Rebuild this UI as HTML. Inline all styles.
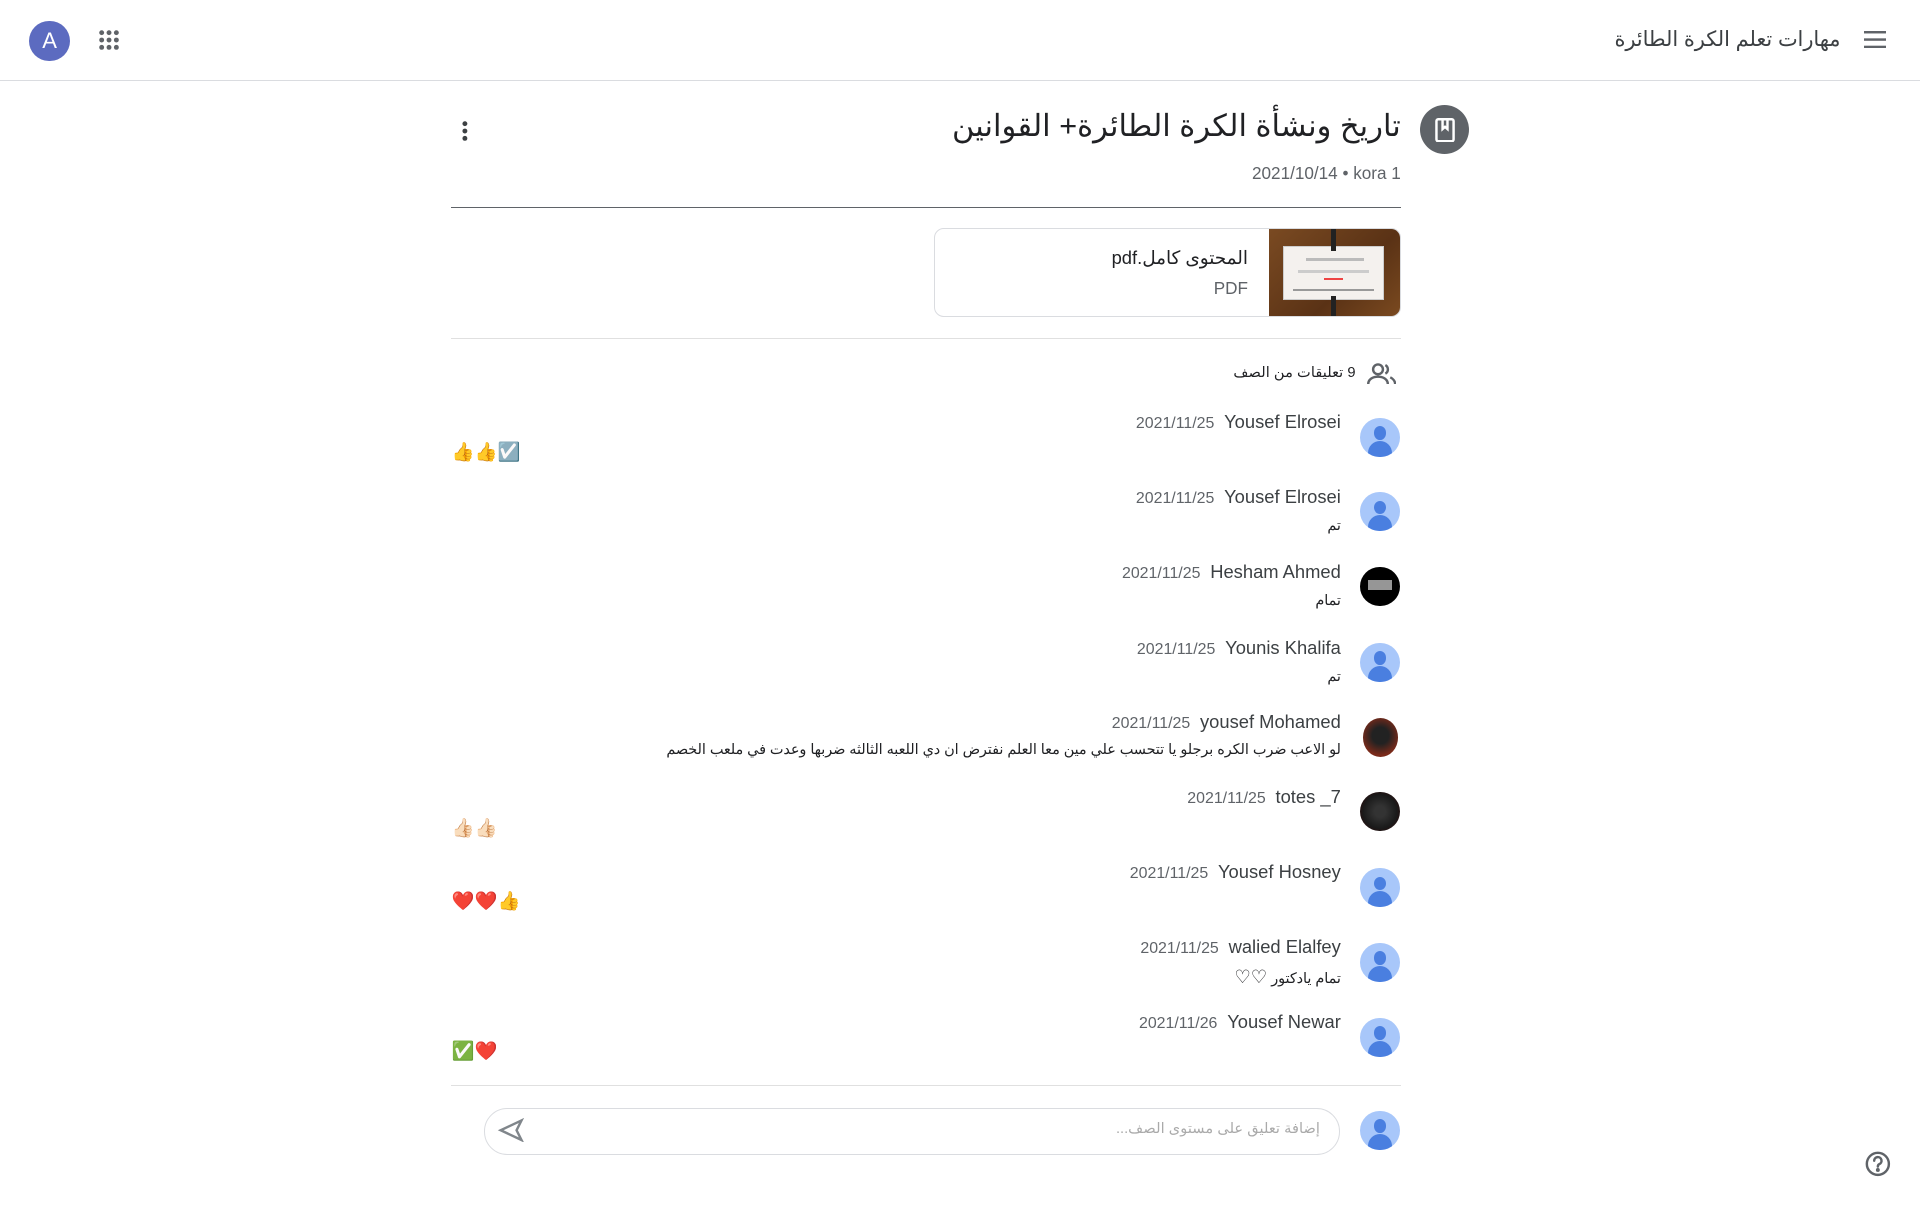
<!DOCTYPE html>
<html><head><meta charset="utf-8">
<style>
*{margin:0;padding:0;box-sizing:border-box}
html,body{width:1920px;height:1206px;overflow:hidden;background:#fff}
#w{zoom:1.22449;width:1568px;height:985px;position:relative;font-family:"Liberation Sans","Noto Sans CJK SC",sans-serif;color:#3c4043}
.a{position:absolute}
.r{position:absolute;text-align:right;white-space:nowrap;direction:rtl}
.av{position:absolute;width:32px;height:32px;border-radius:50%;background:#a8c7fa;overflow:hidden}
.av:before{content:"";position:absolute;left:11px;top:7px;width:10px;height:11px;border-radius:50%;background:#4a7fe0}
.av:after{content:"";position:absolute;left:6px;top:19px;width:20px;height:14px;border-radius:10px 10px 4px 4px;background:#4a7fe0}
.nm{font-size:15px;color:#3c4043}
.dt{font-size:13px;color:#5f6368;margin-right:8px}
.bd{font-size:11.7px;color:#202124}
.em{position:absolute;left:369px;font-size:15px;font-family:"DejaVu Sans",sans-serif}
</style></head><body><div id="w">
<div class="a" style="left:0;top:65px;width:1568px;height:1px;background:#dadce0"></div>
<div class="a" style="left:24px;top:17px;width:33px;height:33px;border-radius:50%;background:#5c6bc0;color:#fff;font-size:18px;text-align:center;line-height:33px">A</div>
<svg class="a" style="left:80px;top:24px" width="18" height="18" viewBox="0 0 18 18" fill="#5f6368"><circle cx="3" cy="3" r="2"/><circle cx="9" cy="3" r="2"/><circle cx="15" cy="3" r="2"/><circle cx="3" cy="9" r="2"/><circle cx="9" cy="9" r="2"/><circle cx="15" cy="9" r="2"/><circle cx="3" cy="15" r="2"/><circle cx="9" cy="15" r="2"/><circle cx="15" cy="15" r="2"/></svg>
<div class="r" style="right:65px;top:22px;font-size:17px;color:#3c4043">مهارات تعلم الكرة الطائرة</div>
<svg class="a" style="left:1522px;top:25px" width="18" height="14" viewBox="0 0 18 14" fill="#5f6368"><rect y="0" width="18" height="2"/><rect y="6" width="18" height="2"/><rect y="12" width="18" height="2"/></svg>

<div class="a" style="left:1160px;top:86px;width:40px;height:40px;border-radius:50%;background:#5f6368"></div>
<svg class="a" style="left:1171px;top:96px" width="18" height="20" viewBox="0 0 18 20" fill="none" stroke="#fff" stroke-width="2"><rect x="2" y="1" width="14" height="18" rx="1.5"/><path d="M7 1v8l2-1.8 2 1.8V1"/></svg>
<div class="r" style="right:424px;top:89px;font-size:25px;color:#202124">تاريخ ونشأة الكرة الطائرة+ القوانين</div>
<div class="r" style="right:424px;top:133px;font-size:14px;color:#5f6368;direction:ltr">2021/10/14 • kora 1</div>
<svg class="a" style="left:376px;top:98px" width="8" height="18" viewBox="0 0 8 18" fill="#3c4043"><circle cx="4" cy="3" r="2"/><circle cx="4" cy="9" r="2"/><circle cx="4" cy="15" r="2"/></svg>
<div class="a" style="left:368px;top:169px;width:776px;height:1px;background:#5f6368"></div>

<div class="a" style="left:763px;top:186px;width:381px;height:73px;border:1px solid #dadce0;border-radius:8px;overflow:hidden">
<div class="a" style="right:0;top:0;width:107px;height:73px;background:linear-gradient(135deg,#7a4a22,#5a3215 60%,#7b4a20)">
<div class="a" style="left:12px;top:14px;width:82px;height:44px;background:#f4f1ee;border:1px solid #ccc"></div>
<div class="a" style="left:51px;top:0;width:4px;height:18px;background:#222"></div>
<div class="a" style="left:51px;top:55px;width:4px;height:18px;background:#222"></div>
<div class="a" style="left:30px;top:24px;width:48px;height:2px;background:#bbb"></div>
<div class="a" style="left:24px;top:34px;width:58px;height:2px;background:#ccc"></div>
<div class="a" style="left:45px;top:40px;width:16px;height:2px;background:#e44"></div>
<div class="a" style="left:20px;top:49px;width:66px;height:2px;background:#999"></div>
</div>
<div class="r" style="right:124px;top:15px;font-size:15px;color:#202124">المحتوى كامل.pdf</div>
<div class="r" style="right:124px;top:40px;font-size:14px;color:#5f6368">PDF</div>
</div>
<div class="a" style="left:368px;top:276px;width:776px;height:1px;background:#e0e0e0"></div>

<svg class="a" style="left:1116px;top:296px" width="24" height="20" viewBox="0 0 24 20" fill="none" stroke="#5f6368" stroke-width="2"><circle cx="9" cy="6" r="4"/><path d="M1 18c0-4 4-6 8-6s8 2 8 6"/><path d="M15 2.5a4 4 0 0 1 0 7M19 12.5c2 1 4 3 4 5.5"/></svg>
<div class="r" style="right:461px;top:297px;font-size:12px;color:#202124">9 تعليقات من الصف</div>

<div class="av" style="left:1111px;top:341px"></div>
<div class="r" style="right:473px;top:336px;direction:ltr"><span class="dt">2021/11/25</span><span class="nm">Yousef Elrosei</span></div>
<div class="em" style="top:361px">👍👍☑️</div>

<div class="av" style="left:1111px;top:402px"></div>
<div class="r" style="right:473px;top:397px;direction:ltr"><span class="dt">2021/11/25</span><span class="nm">Yousef Elrosei</span></div>
<div class="r bd" style="right:473px;top:423px">تم</div>

<div class="a" style="left:1111px;top:463px;width:32px;height:32px;border-radius:50%;background:#000"></div>
<div class="a" style="left:1117px;top:474px;width:20px;height:8px;background:#bbb;opacity:.8"></div>
<div class="r" style="right:473px;top:458px;direction:ltr"><span class="dt">2021/11/25</span><span class="nm">Hesham Ahmed</span></div>
<div class="r bd" style="right:473px;top:484px">تمام</div>

<div class="av" style="left:1111px;top:525px"></div>
<div class="r" style="right:473px;top:520px;direction:ltr"><span class="dt">2021/11/25</span><span class="nm">Younis Khalifa</span></div>
<div class="r bd" style="right:473px;top:546px">تم</div>

<div class="a" style="left:1113px;top:586px;width:29px;height:32px;border-radius:50%;background:radial-gradient(circle at 50% 45%,#222 30%,#7a2a1a 70%)"></div>
<div class="r" style="right:473px;top:581px;direction:ltr"><span class="dt">2021/11/25</span><span class="nm">yousef Mohamed</span></div>
<div class="r bd" style="right:473px;top:606px">لو الاعب ضرب الكره برجلو يا تتحسب علي مين معا العلم نفترض ان دي اللعبه الثالثه ضربها وعدت في ملعب الخصم</div>

<div class="a" style="left:1111px;top:647px;width:32px;height:32px;border-radius:50%;background:radial-gradient(circle,#333 20%,#1a1a1a 60%,#300 100%)"></div>
<div class="r" style="right:473px;top:642px;direction:ltr"><span class="dt">2021/11/25</span><span class="nm">totes _7</span></div>
<div class="em" style="top:668px">👍🏻👍🏻</div>

<div class="av" style="left:1111px;top:709px"></div>
<div class="r" style="right:473px;top:703px;direction:ltr"><span class="dt">2021/11/25</span><span class="nm">Yousef Hosney</span></div>
<div class="em" style="top:728px">❤️❤️👍</div>

<div class="av" style="left:1111px;top:770px"></div>
<div class="r" style="right:473px;top:764px;direction:ltr"><span class="dt">2021/11/25</span><span class="nm">walied Elalfey</span></div>
<div class="r bd" style="right:473px;top:790px">تمام يادكتور <span style="font-family:'DejaVu Sans';font-size:15px">♡♡</span></div>

<div class="av" style="left:1111px;top:831px"></div>
<div class="r" style="right:473px;top:826px;direction:ltr"><span class="dt">2021/11/26</span><span class="nm">Yousef Newar</span></div>
<div class="em" style="top:850px">✅❤️</div>

<div class="a" style="left:368px;top:886px;width:776px;height:1px;background:#e0e0e0"></div>
<div class="a" style="left:395px;top:905px;width:699px;height:38px;border:1px solid #dadce0;border-radius:19px"></div>
<div class="r" style="right:490px;top:915px;font-size:12px;color:#aaa">إضافة تعليق على مستوى الصف...</div>
<svg class="a" style="left:406px;top:913px" width="22" height="20" viewBox="0 0 22 20" fill="none" stroke="#80868b" stroke-width="2"><path d="M20 2L3 10l17 8-4-8z"/></svg>
<div class="av" style="left:1111px;top:907px"></div>

<svg class="a" style="left:1523px;top:940px" width="21" height="21" viewBox="0 0 21 21" fill="none" stroke="#5f6368" stroke-width="2"><circle cx="10.5" cy="10.5" r="9"/><path d="M7.5 8a3 3 0 1 1 4 2.8c-.8.4-1 1-1 2" stroke-linecap="round"/><circle cx="10.5" cy="15.5" r=".6" fill="#5f6368"/></svg>
</div></body></html>
